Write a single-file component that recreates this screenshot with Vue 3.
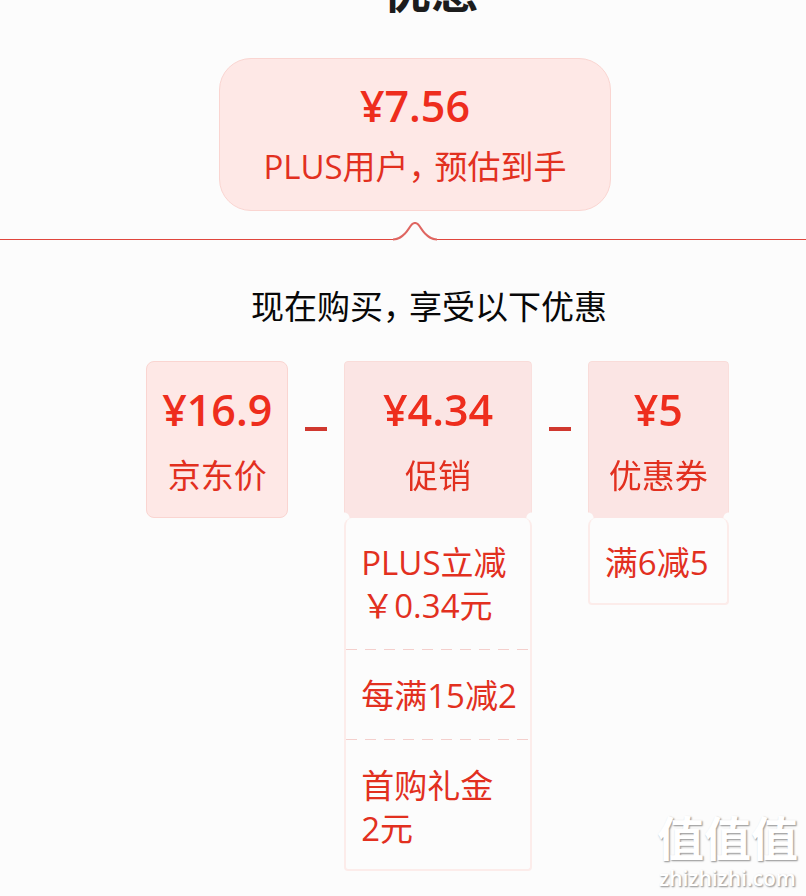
<script setup>
const total = { price: '¥7.56', label: ['PLUS用户', '预估到手'] }

const parts = [
  { price: '¥16.9', label: '京东价', kind: 'base', details: [] },
  {
    price: '¥4.34',
    label: '促销',
    kind: 'promo',
    details: [['PLUS立减', '￥0.34元'], ['每满15减2'], ['首购礼金', '2元']],
  },
  { price: '¥5', label: '优惠券', kind: 'coupon', details: [['满6减5']] },
]
</script>

<template>
  <main class="page">
    <header class="title-bar">
      <h1 class="title">优惠</h1>
    </header>

    <section class="summary">
      <div class="total">
        <strong class="price">{{ total.price }}</strong>
        <span class="label">{{ total.label[0] }}<span class="comma">，</span>{{ total.label[1] }}</span>
      </div>
    </section>

    <div class="divider" aria-hidden="true">
      <span class="rule rule-start"></span>
      <svg class="peak" width="44" height="19" viewBox="0 0 44 19">
        <path d="M0 17.5 C6 17.5 9 14.500 12 11.500 C15 8.500 16.500 5 19 2.300 Q22 -0.300 25 2.300 C27.500 5 29 8.500 32 11.500 C35 14.500 38 17.500 44 17.500" />
      </svg>
      <span class="rule rule-end"></span>
    </div>

    <h2 class="subtitle">现在购买<span class="comma">，</span>享受以下优惠</h2>

    <section class="formula">
      <template v-for="(part, i) in parts" :key="part.label">
        <span v-if="i > 0" class="minus" role="img" aria-label="减"></span>
        <article class="part" :class="part.kind">
          <div class="head">
            <strong class="price">{{ part.price }}</strong>
            <span class="label">{{ part.label }}</span>
          </div>
          <ul v-if="part.details.length" class="details">
            <li v-for="(lines, d) in part.details" :key="d" class="detail">
              <span v-for="line in lines" :key="line" class="line">{{ line }}</span>
            </li>
          </ul>
        </article>
      </template>
    </section>

    <footer class="mark">
      <span class="mark-name">值值值</span>
      <span class="mark-site">zhizhizhi.com</span>
    </footer>
  </main>
</template>

<style>
body {
  background: #fcfcfc;
}
</style>

<style scoped>
.page {
  position: relative;
  box-sizing: border-box;
  min-height: 100vh;
  overflow: hidden;
  color: #e2301f;
  font-family: "Open Sans", "Noto Sans CJK SC", sans-serif;
  font-size: 33px;
  font-weight: 400;
  white-space: nowrap;
}

.title-bar {
  display: flex;
  align-items: flex-end;
  justify-content: center;
  height: 14px;
  padding-left: 56px;
}

.title {
  margin: 0;
  color: #1c1c1c;
  font-size: 48px;
  font-weight: 700;
  line-height: 48px;
}

.summary {
  display: flex;
  justify-content: center;
  padding: 44px 0 11px 24px;
}

.total {
  display: flex;
  flex-direction: column;
  align-items: center;
  gap: 1px;
  padding: 17px 43px 13px;
  border: 1px solid #fad5d1;
  border-radius: 32px;
  background: #fee8e6;
}

.price {
  color: #ee2d1d;
  font-size: 43px;
  font-weight: 600;
  line-height: 60px;
}

.label {
  line-height: 60px;
}

.comma {
  display: inline-block;
  width: 26px;
  font-feature-settings: "halt";
  text-align: left;
}

.divider {
  display: flex;
  align-items: flex-end;
}

.rule {
  height: 1px;
  margin-bottom: 1px;
  background: #e0463d;
}

.rule-start {
  flex: 0 0 calc(50% - 10px);
}

.rule-end {
  flex: 1;
}

.peak {
  display: block;
  fill: none;
  stroke: #df6661;
  stroke-width: 2;
}

.subtitle {
  margin: 0;
  padding: 43px 0 31px 52px;
  color: #080808;
  font-size: 33px;
  font-weight: 400;
  line-height: 46px;
  text-align: center;
}

.formula {
  display: flex;
  align-items: flex-start;
  justify-content: center;
  gap: 17px;
  padding-left: 69px;
}

.head {
  display: flex;
  flex-direction: column;
  align-items: center;
  gap: 6px;
  box-sizing: border-box;
  padding: 18px 20px 11px;
  border: 1px solid #f9dcd9;
  border-radius: 4px 4px 0 0;
  background: #fbe5e4;
}

.base .head {
  padding: 18px 15px 11px;
  border-color: #fad5d1;
  border-radius: 8px;
  background: #fee8e6;
}

.promo .head,
.coupon .head {
  border-bottom-width: 0;
  padding-bottom: 12px;
  -webkit-mask: radial-gradient(circle at 0 100%, transparent 5px, #000 6px) left / 51% 100% no-repeat,
    radial-gradient(circle at 100% 100%, transparent 5px, #000 6px) right / 51% 100% no-repeat;
  mask: radial-gradient(circle at 0 100%, transparent 5px, #000 6px) left / 51% 100% no-repeat,
    radial-gradient(circle at 100% 100%, transparent 5px, #000 6px) right / 51% 100% no-repeat;
}

.minus {
  width: 22px;
  height: 4px;
  margin-top: 66px;
  background: #d0382f;
}

.details {
  margin: 0;
  padding: 0;
  border: 2px solid #fcecea;
  border-top: 0;
  border-radius: 8px 8px 4px 4px;
  list-style: none;
}

.detail {
  padding: 23px 13px 22px 15px;
}

.detail + .detail {
  padding-top: 25px;
  background: repeating-linear-gradient(90deg, #f4cfcc 0 11px, transparent 11px 19px) top / 100% 1px no-repeat;
}

.detail:last-child {
  padding-bottom: 19px;
}

.line {
  display: block;
  line-height: 43px;
}

.mark {
  position: absolute;
  right: 8px;
  bottom: 5px;
  display: flex;
  flex-direction: column;
  align-items: center;
  color: #ffffff;
  text-shadow: 1px 1px 2px #a0a0a0, 1px 1px 1px #c0c0c0;
}

.mark-name {
  font-size: 47px;
  font-weight: 700;
  line-height: 54px;
}

.mark-site {
  font-size: 21px;
  font-weight: 600;
  line-height: 26px;
}
</style>
